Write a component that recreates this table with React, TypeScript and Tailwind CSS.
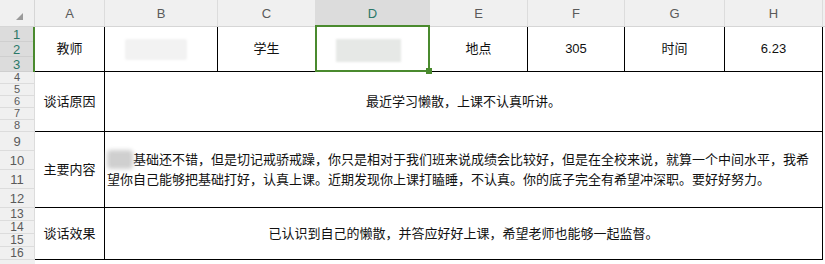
import React from 'react';

interface RowHead {
    n: number;
    h: string;
}

const selectedRows: RowHead[] = [
    { n: 1, h: 'h-[15px]' },
    { n: 2, h: 'h-[15px]' },
    { n: 3, h: 'h-[15px]' },
];

const otherRows: RowHead[] = [
    { n: 4, h: 'h-[12px] text-[11px]' },
    { n: 5, h: 'h-[12px] text-[11px]' },
    { n: 6, h: 'h-[12px] text-[11px]' },
    { n: 7, h: 'h-[12px] text-[11px]' },
    { n: 8, h: 'h-[12px] text-[11px]' },
    { n: 9, h: 'h-[19px]' },
    { n: 10, h: 'h-[19px]' },
    { n: 11, h: 'h-[19px]' },
    { n: 12, h: 'h-[19px]' },
    { n: 13, h: 'h-[13px] text-[12px]' },
    { n: 14, h: 'h-[13px] text-[12px]' },
    { n: 15, h: 'h-[13px] text-[12px]' },
    { n: 16, h: 'h-[13px] text-[12px]' },
];

const columns = [
    { key: 'A', w: 'w-[70px]' },
    { key: 'B', w: 'w-[113px]' },
    { key: 'C', w: 'w-[98px]' },
    { key: 'D', w: 'w-[114px]' },
    { key: 'E', w: 'w-[98px]' },
    { key: 'F', w: 'w-[97px]' },
    { key: 'G', w: 'w-[100px]' },
    { key: 'H', w: 'w-[98px]' },
];

const Cell: React.FC<{ w: string; children?: React.ReactNode; className?: string }> = ({
    w,
    children,
    className = '',
}) => (
    <div
        className={`${w} h-full shrink-0 flex items-center justify-center border-r border-b border-black ${className}`}
    >
        {children}
    </div>
);

const App: React.FC = () => {
    return (
        <div
            className="w-[825px] h-[264px] overflow-hidden bg-white flex text-[13px] text-[#111]"
            style={{ fontFamily: '"Liberation Sans", "Noto Sans CJK SC", sans-serif' }}
        >
            {/* row numbers */}
            <div className="w-[35px] shrink-0 flex flex-col bg-[#f0f0f0] text-[#5a5a5a] text-[13px]">
                <div className="h-[27px] shrink-0 flex items-end justify-center pb-[6px] border-b border-r border-[#d6d6d6]">
                    <svg width="7" height="7" viewBox="0 0 7 7" className="ml-[4px]">
                        <polygon points="7,0 7,7 0,7" fill="#9a9a9a" />
                    </svg>
                </div>
                <div className="flex flex-col bg-[#dcdcdc] border-r-2 border-[#4a8a2e] text-[#2b7868]">
                    {selectedRows.map((r) => (
                        <div
                            key={r.n}
                            className={`${r.h} shrink-0 flex items-center justify-center leading-none border-b border-[#cfcfcf]`}
                        >
                            {r.n}
                        </div>
                    ))}
                </div>
                {otherRows.map((r) => (
                    <div
                        key={r.n}
                        className={`${r.h} shrink-0 flex items-center justify-center leading-none border-b border-r border-[#dcdcdc]`}
                    >
                        {r.n}
                    </div>
                ))}
            </div>

            <div className="flex-1 flex flex-col">
                {/* column letters */}
                <div className="h-[27px] shrink-0 flex bg-[#f0f0f0] text-[#5a5a5a] border-b border-[#d6d6d6]">
                    {columns.map((c) => (
                        <div
                            key={c.key}
                            className={`${c.w} shrink-0 flex items-end justify-center pb-[3px] border-r border-[#dcdcdc] ${
                                c.key === 'D' ? 'bg-[#dcdcdc] text-[#2b7868]' : ''
                            }`}
                        >
                            {c.key}
                        </div>
                    ))}
                </div>

                {/* rows 1-3 */}
                <div className="h-[45px] shrink-0 flex">
                    <Cell w="w-[70px]">教师</Cell>
                    <Cell w="w-[113px]">
                        <div className="w-[62px] h-[21px] bg-[#f2f2f2] rounded-[2px] blur-[1px] ml-[-10px]" />
                    </Cell>
                    <Cell w="w-[98px]">学生</Cell>
                    <Cell w="w-[114px]" className="relative">
                        <div className="w-[65px] h-[23px] bg-[#e6e8e6] blur-[1px] ml-[-8px] mt-[2px]" />
                        <div className="absolute -left-[1px] -top-[2px] -right-[1px] -bottom-[1px] border-2 border-[#4a8a2e]" />
                        <div className="absolute -right-[3px] -bottom-[3px] w-[6px] h-[6px] bg-[#4a8a2e]" />
                    </Cell>
                    <Cell w="w-[98px]">地点</Cell>
                    <Cell w="w-[97px]">305</Cell>
                    <Cell w="w-[100px]">时间</Cell>
                    <Cell w="w-[98px]">6.23</Cell>
                </div>

                {/* rows 4-8 */}
                <div className="h-[60px] shrink-0 flex">
                    <Cell w="w-[70px]">谈话原因</Cell>
                    <Cell w="w-[718px]">最近学习懒散，上课不认真听讲。</Cell>
                </div>

                {/* rows 9-12 */}
                <div className="h-[76px] shrink-0 flex">
                    <Cell w="w-[70px]">主要内容</Cell>
                    <Cell w="w-[718px]" className="!justify-start pl-[2px]">
                        <div className="flex flex-col leading-[20px] whitespace-nowrap">
                            <div className="flex items-center">
                                <span className="inline-block w-[26px] h-[19px] rounded-[4px] bg-[#cfcfcf] blur-[2px]" />
                                基础还不错，但是切记戒骄戒躁，你只是相对于我们班来说成绩会比较好，但是在全校来说，就算一个中间水平，我希
                            </div>
                            <div>
                                望你自己能够把基础打好，认真上课。近期发现你上课打瞌睡，不认真。你的底子完全有希望冲深职。要好好努力。
                            </div>
                        </div>
                    </Cell>
                </div>

                {/* rows 13-16 */}
                <div className="h-[52px] shrink-0 flex">
                    <Cell w="w-[70px]">谈话效果</Cell>
                    <Cell w="w-[718px]">已认识到自己的懒散，并答应好好上课，希望老师也能够一起监督。</Cell>
                </div>
            </div>
        </div>
    );
};

export default App;
